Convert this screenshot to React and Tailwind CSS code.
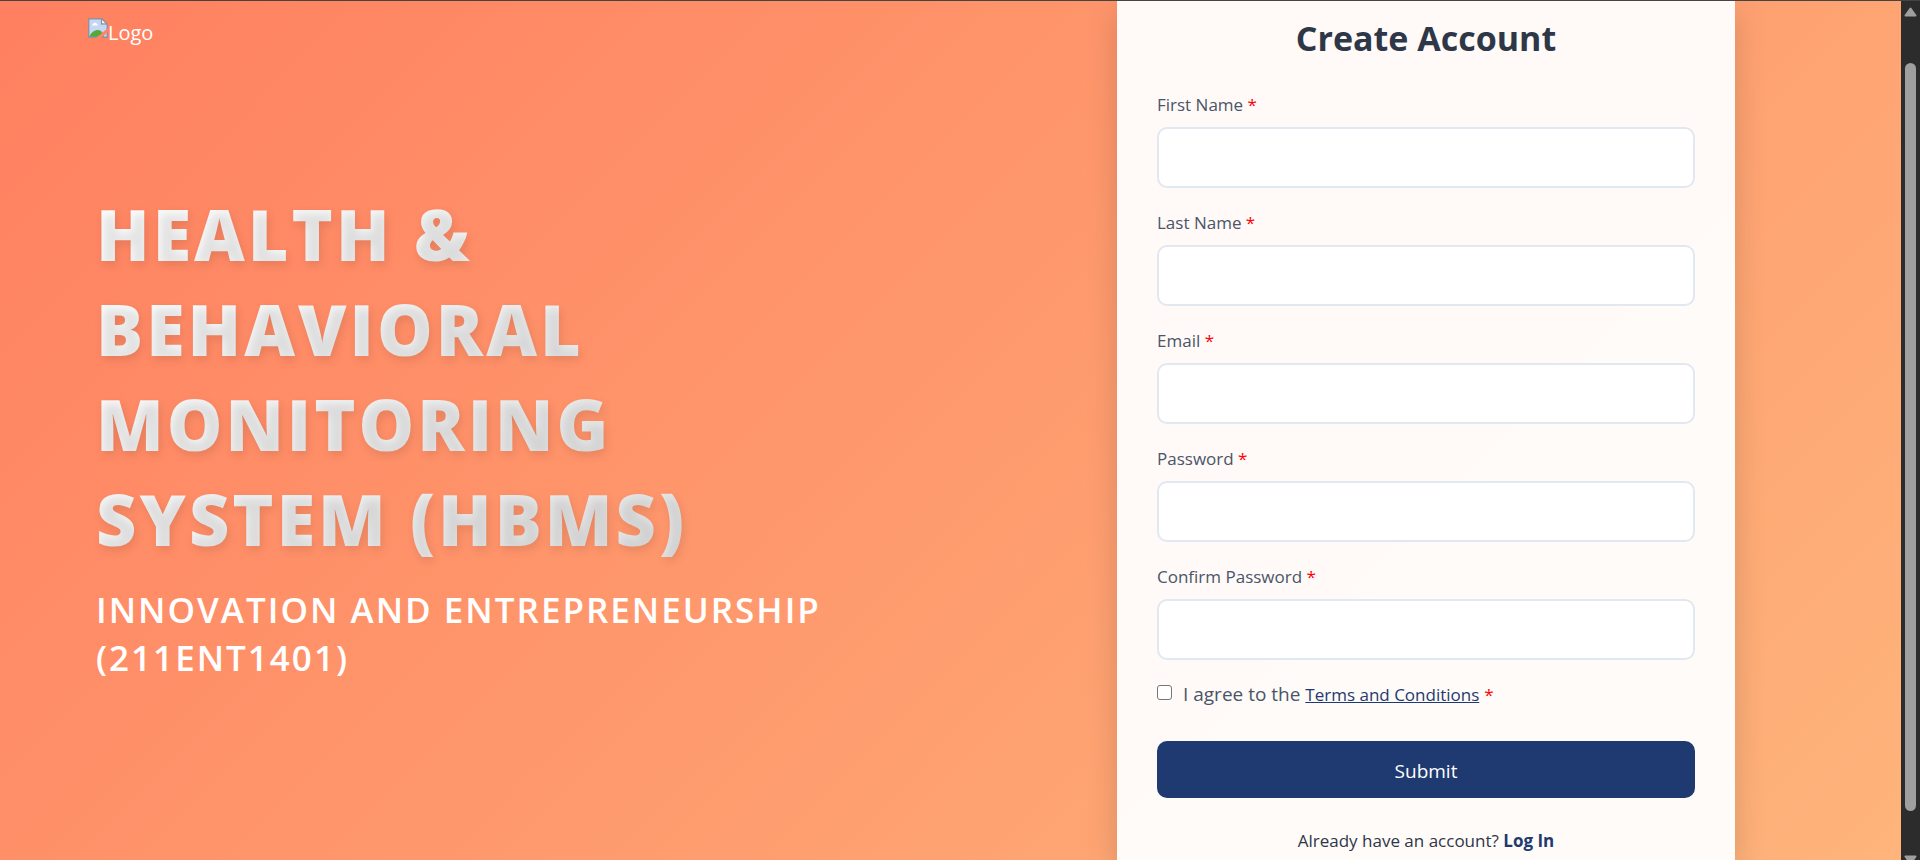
import React from "react";

const fields = [
  { id: "first-name", label: "First Name", type: "text" },
  { id: "last-name", label: "Last Name", type: "text" },
  { id: "email", label: "Email", type: "email" },
  { id: "password", label: "Password", type: "password" },
  { id: "confirm-password", label: "Confirm Password", type: "password" },
];

function Logo() {
  return (
    <a href="#home" className="flex items-start text-xl/8 text-white">
      <svg width="20" height="20" viewBox="0 0 20 20" className="mt-px" aria-hidden="true">
        <path d="M1 1H13L19 7V19H1Z" fill="#c6d6f7" />
        <path d="M4 7.500a2 2 0 0 1 1.500-2 2 2 0 0 1 3.500.5 1 1 0 0 1 .5 1.500Z" fill="#fff" />
        <path d="M1 19C4 12 11 10 14 14L16 19Z" fill="#55a938" />
        <path d="M13 1V7H19Z" fill="#fff" />
        <path d="M13.500 1V6H19" fill="none" stroke="#8f9499" strokeWidth="1.300" />
        <path d="M.7.700H14L19.300 6V19.300H.7Z" fill="none" stroke="#8f9499" strokeWidth="1.400" />
        <path d="M8 20L20 10V14L13 20Z" fill="#ff8462" />
      </svg>
      Logo
    </a>
  );
}

function Required() {
  return <span className="text-[17px] text-[#ff0000]">*</span>;
}

function Field({ id, label, type }) {
  return (
    <div className="flex flex-col gap-2.5">
      <label htmlFor={id} className="text-[17px]/6 text-[#4a5568]">
        {label} <Required />
      </label>
      <input
        id={id}
        type={type}
        className="h-[61px] w-full rounded-[10px] border-2 border-[#e2e8f0] bg-white px-4 text-[17px] text-[#2d3748] outline-none"
      />
    </div>
  );
}

function ScrollRail() {
  return (
    <div className="flex w-[19px] shrink-0 flex-col items-center bg-[#2c2c2c] pt-[6px]" aria-hidden="true">
      <svg width="13" height="10" viewBox="0 0 13 10" className="shrink-0">
        <path d="M6.500 1.500L11.500 8.500H1.500Z" fill="#9f9f9f" stroke="#9f9f9f" strokeWidth="2" strokeLinejoin="round" />
      </svg>
      <div className="mt-[46px] mb-11 w-[11px] flex-1 rounded-full bg-[#9f9f9f]" />
      <svg width="13" height="5" viewBox="0 0 13 5" className="shrink-0">
        <path d="M1.500 1.500H11.500L6.500 8.500Z" fill="#9f9f9f" stroke="#9f9f9f" strokeWidth="2" strokeLinejoin="round" />
      </svg>
    </div>
  );
}

export default function App() {
  return (
    <div className="flex h-screen overflow-hidden border-t border-[#444444] font-['Open_Sans','Noto_Sans',sans-serif]">
      <div className="flex min-w-0 flex-1 justify-between bg-[linear-gradient(135deg,#ff7e5f,#feb47b)] bg-[length:100%_110%] bg-bottom pr-[166px] pl-[88px]">
        <section className="flex w-[770px] flex-col pt-4">
          <Logo />
          <div className="mt-[138px] px-2 uppercase">
            <h1 className="bg-[linear-gradient(135deg,#ffffff,#e0e0e0)] bg-clip-text text-[70px]/[95px] font-extrabold tracking-[3px] text-transparent [text-shadow:2px_4px_10px_rgba(0,0,0,0.1)]">
              Health &amp; Behavioral Monitoring System (HBMS)
            </h1>
            <p className="mt-[19px] text-[35px]/[48px] font-semibold tracking-[2px] text-white">
              Innovation and Entrepreneurship (211ENT1401)
            </p>
          </div>
        </section>

        <main className="w-[618px] shrink-0 bg-white/95 px-10 pt-[11px] shadow-[0_10px_30px_rgba(0,0,0,0.15)]">
          <h2 className="text-center text-[34px]/[52px] font-bold text-[#2d3748]">Create Account</h2>
          <form className="mt-[29px]" onSubmit={(e) => e.preventDefault()}>
            <div className="flex flex-col gap-[23px]">
              {fields.map((field) => (
                <Field key={field.id} {...field} />
              ))}
            </div>
            <div className="mt-[18px] flex items-center text-xl/8 text-[#4a5568]">
              <input
                id="agree"
                type="checkbox"
                className="mr-[11px] mb-1 size-[15px] appearance-none rounded-[3px] border border-[#767676] bg-white"
              />
              <label htmlFor="agree" className="text-[19px]">
                I agree to the{" "}
                <a href="#terms" className="text-[17px] text-[#1e3a70] underline">
                  Terms and Conditions
                </a>{" "}
                <Required />
              </label>
            </div>
            <button type="submit" className="mt-[30px] h-[57px] w-full rounded-[10px] bg-[#1e3a70] pt-[3px] text-[19px] font-medium text-white">
              Submit
            </button>
          </form>
          <p className="mt-[31px] text-center text-[17px]/6 text-[#2d3748]">
            Already have an account?{" "}
            <a href="#login" className="font-bold text-[#1e3a70]">
              Log In
            </a>
          </p>
        </main>
      </div>
      <ScrollRail />
    </div>
  );
}
